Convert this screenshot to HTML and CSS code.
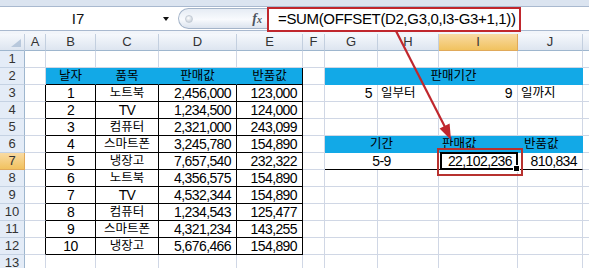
FILE: index.html
```html
<!DOCTYPE html>
<html lang="ko">
<head>
<meta charset="utf-8">
<title>Excel OFFSET</title>
<link rel="stylesheet" href="styles.css">
</head>
<body>
<div class="page">
  <div class="ribbon-edge"></div>
  <div class="fbar">
    <div class="namebox"><span class="name">I7</span><span class="drop"></span></div>
    <div class="pill"><span class="dot"></span><span class="fx">f<span class="fxx">x</span></span></div>
    <div class="formula">=SUM(OFFSET(D2,G3,0,I3-G3+1,1))</div>
  </div>
  <div class="gap"></div>
  <div class="sheet">
    <!-- column headers -->
    <div class="c hd corner"></div><div class="c hd">A</div><div class="c hd">B</div><div class="c hd">C</div><div class="c hd">D</div><div class="c hd">E</div><div class="c hd">F</div><div class="c hd">G</div><div class="c hd">H</div><div class="c hd sel">I</div><div class="c hd">J</div><div class="c hd"></div>
    <!-- row 1 -->
    <div class="c rh">1</div><div class="c"></div><div class="c"></div><div class="c"></div><div class="c"></div><div class="c"></div><div class="c"></div><div class="c"></div><div class="c"></div><div class="c"></div><div class="c"></div><div class="c"></div>
    <!-- row 2 -->
    <div class="c rh">2</div><div class="c"></div><div class="c blue th ko ctr">날자</div><div class="c blue th ko ctr">품목</div><div class="c blue th ko ctr">판매값</div><div class="c blue th last ko ctr">반품값</div><div class="c"></div><div class="c blue span4 ko ctr">판매기간</div><div class="c"></div>
    <!-- row 3 -->
    <div class="c rh">3</div><div class="c tl"></div><div class="c t ctr">1</div><div class="c t ko ctr">노트북</div><div class="c t r">2,456,000</div><div class="c t r">123,000</div><div class="c"></div><div class="c r">5</div><div class="c ko l">일부터</div><div class="c r">9</div><div class="c ko l">일까지</div><div class="c"></div>
    <!-- row 4 -->
    <div class="c rh">4</div><div class="c tl"></div><div class="c t ctr">2</div><div class="c t ctr">TV</div><div class="c t r">1,234,500</div><div class="c t r">124,000</div><div class="c"></div><div class="c"></div><div class="c"></div><div class="c"></div><div class="c"></div><div class="c"></div>
    <!-- row 5 -->
    <div class="c rh">5</div><div class="c tl"></div><div class="c t ctr">3</div><div class="c t ko ctr">컴퓨터</div><div class="c t r">2,321,000</div><div class="c t r">243,099</div><div class="c"></div><div class="c"></div><div class="c"></div><div class="c"></div><div class="c"></div><div class="c"></div>
    <!-- row 6 -->
    <div class="c rh">6</div><div class="c tl"></div><div class="c t ctr">4</div><div class="c t ko ctr">스마트폰</div><div class="c t r">3,245,780</div><div class="c t r">154,890</div><div class="c"></div><div class="c blue span2 ko ctr">기간</div><div class="c blue ko l">판매값</div><div class="c blue ko l wide">반품값</div><div class="c"></div>
    <!-- row 7 -->
    <div class="c rh sel">7</div><div class="c tl"></div><div class="c t ctr">5</div><div class="c t ko ctr">냉장고</div><div class="c t r">7,657,540</div><div class="c t r">232,322</div><div class="c"></div><div class="c span2 ul ctr">5-9</div><div class="c ul r active">22,102,236</div><div class="c ul r">810,834</div><div class="c"></div>
    <!-- row 8 -->
    <div class="c rh">8</div><div class="c tl"></div><div class="c t ctr">6</div><div class="c t ko ctr">노트북</div><div class="c t r">4,356,575</div><div class="c t r">154,890</div><div class="c"></div><div class="c"></div><div class="c"></div><div class="c"></div><div class="c"></div><div class="c"></div>
    <!-- row 9 -->
    <div class="c rh">9</div><div class="c tl"></div><div class="c t ctr">7</div><div class="c t ctr">TV</div><div class="c t r">4,532,344</div><div class="c t r">154,890</div><div class="c"></div><div class="c"></div><div class="c"></div><div class="c"></div><div class="c"></div><div class="c"></div>
    <!-- row 10 -->
    <div class="c rh">10</div><div class="c tl"></div><div class="c t ctr">8</div><div class="c t ko ctr">컴퓨터</div><div class="c t r">1,234,543</div><div class="c t r">125,477</div><div class="c"></div><div class="c"></div><div class="c"></div><div class="c"></div><div class="c"></div><div class="c"></div>
    <!-- row 11 -->
    <div class="c rh">11</div><div class="c tl"></div><div class="c t ctr">9</div><div class="c t ko ctr">스마트폰</div><div class="c t r">4,321,234</div><div class="c t r">143,255</div><div class="c"></div><div class="c"></div><div class="c"></div><div class="c"></div><div class="c"></div><div class="c"></div>
    <!-- row 12 -->
    <div class="c rh">12</div><div class="c tl"></div><div class="c t ctr">10</div><div class="c t ko ctr">냉장고</div><div class="c t r">5,676,466</div><div class="c t r">154,890</div><div class="c"></div><div class="c"></div><div class="c"></div><div class="c"></div><div class="c"></div><div class="c"></div>
    <!-- row 13 -->
    <div class="c rh">13</div><div class="c"></div><div class="c"></div><div class="c"></div><div class="c"></div><div class="c"></div><div class="c"></div><div class="c"></div><div class="c"></div><div class="c"></div><div class="c"></div><div class="c"></div>
  </div>

  <div class="mark mark-formula"></div>
  <div class="mark mark-cell"></div>
  <svg class="arrow" width="589" height="268" viewBox="0 0 589 268">
    <line x1="396" y1="31" x2="445" y2="127" stroke="#c0272d" stroke-width="2.2"/>
    <polygon points="451,140 439.6,128.4 449.6,123.4" fill="#c0272d"/>
  </svg>
</div>
</body>
</html>
```

FILE: styles.css
```css
html, body {
  margin: 0;
  padding: 0;
  background: #ffffff;
}

body {
  width: 589px;
  height: 268px;
  overflow: hidden;
  font-family: "Liberation Sans", "Noto Sans CJK KR", sans-serif;
}

.page {
  position: relative;
  width: 589px;
  height: 268px;
  overflow: hidden;
}

.ribbon-edge {
  height: 6px;
  background: #dbe4f0;
}

.fbar {
  display: flex;
  height: 25px;
  box-sizing: border-box;
  border-top: 1px solid #a9b9cf;
  border-bottom: 1px solid #a9b9cf;
  background: #ffffff;
}

.namebox {
  width: 178px;
  display: flex;
  align-items: center;
}

.name {
  width: 156px;
  text-align: center;
  font-size: 15px;
  color: #111;
}

.drop {
  width: 0;
  height: 0;
  margin-left: 7px;
  border-left: 3.5px solid transparent;
  border-right: 3.5px solid transparent;
  border-top: 4px solid #111;
}

.pill {
  width: 89px;
  box-sizing: border-box;
  margin: 1px 0;
  border: 1px solid #a4b4c9;
  border-right: none;
  border-radius: 11px 0 0 11px;
  background: linear-gradient(#e6ecf4, #f8fafd 55%, #dbe3ee);
  display: flex;
  align-items: center;
  padding-left: 6px;
}

.dot {
  width: 6px;
  height: 6px;
  border-radius: 50%;
  background: radial-gradient(circle at 40% 35%, #ffffff, #b9c3cf);
  border: 1px solid #c4ccd6;
}

.fx {
  margin-left: auto;
  margin-right: 5px;
  font-family: "Liberation Serif", serif;
  font-style: italic;
  font-weight: bold;
  font-size: 14px;
  color: #4d5560;
}

.fxx {
  font-size: 10px;
}

.formula {
  flex: 1;
  display: flex;
  align-items: center;
  padding-left: 11px;
  font-size: 15px;
  letter-spacing: -0.35px;
  color: #000;
  white-space: nowrap;
}

.gap {
  height: 3px;
  background: #f2f5fa;
}

.sheet {
  display: grid;
  grid-template-columns: 25px 21px 50px 63px 78px 66px 22px 53px 61px 79px 65px 1fr;
  grid-auto-rows: 17px;
}

.c {
  box-sizing: border-box;
  border-right: 1px solid #d0d7e5;
  border-bottom: 1px solid #d0d7e5;
  display: flex;
  align-items: center;
  padding: 0 5px;
  font-size: 14px;
  letter-spacing: -0.6px;
  white-space: nowrap;
  color: #000;
  line-height: 16px;
}

.hd {
  justify-content: center;
  padding: 0;
  font-size: 13px;
  letter-spacing: 0;
  color: #333;
  background: linear-gradient(#f5f8fc, #dde5f0);
  border-right-color: #c3cfdf;
  border-bottom-color: #9eb6ce;
}

.corner {
  position: relative;
}

.corner::after {
  content: "";
  position: absolute;
  right: 3px;
  bottom: 3px;
  width: 10px;
  height: 8px;
  background: #b8c8dc;
  clip-path: polygon(100% 0, 100% 100%, 0 100%);
}

.rh {
  justify-content: center;
  padding: 0;
  font-size: 13px;
  letter-spacing: 0;
  color: #333;
  background: #e4ecf7;
  border-right-color: #9eb6ce;
  border-bottom-color: #c5d2e3;
}

.sel {
  background: linear-gradient(#f9dba3, #f1c25f);
  border-right-color: #e0a95a;
  border-bottom-color: #e0a95a;
}

.ko {
  font-size: 12.5px;
  letter-spacing: 0;
}

.r { justify-content: flex-end; }
.l { justify-content: flex-start; padding-left: 3px; }
.l.wide { padding-left: 6px; }
.ctr { justify-content: center; }

.blue {
  background: #12a9e7;
  border-right-color: #12a9e7;
  border-bottom-color: #12a9e7;
}

.th {
  border-bottom-color: #000;
}

.th.last {
  border-right-color: #000;
}

.t {
  border-right-color: #000;
  border-bottom-color: #000;
}

.tl {
  border-right-color: #000;
}

.ul {
  border-bottom-color: #000;
}

.span4 { grid-column: span 4; }
.span2 { grid-column: span 2; }

.active {
  position: relative;
}

.active::before {
  content: "";
  position: absolute;
  left: 1px;
  top: -1px;
  right: -1px;
  bottom: -1px;
  border: 2px solid #000;
}

.active::after {
  content: "";
  position: absolute;
  right: -3px;
  bottom: -3px;
  width: 5px;
  height: 5px;
  background: #000;
  border: 1px solid #fff;
}

.mark {
  position: absolute;
  box-sizing: border-box;
  border: 2px solid #c0272d;
}

.mark-formula {
  left: 267px;
  top: 7px;
  width: 254px;
  height: 25px;
}

.mark-cell {
  left: 437px;
  top: 148px;
  width: 86px;
  height: 28px;
  border-color: #b7312f;
}

.arrow {
  position: absolute;
  left: 0;
  top: 0;
  pointer-events: none;
}
```
